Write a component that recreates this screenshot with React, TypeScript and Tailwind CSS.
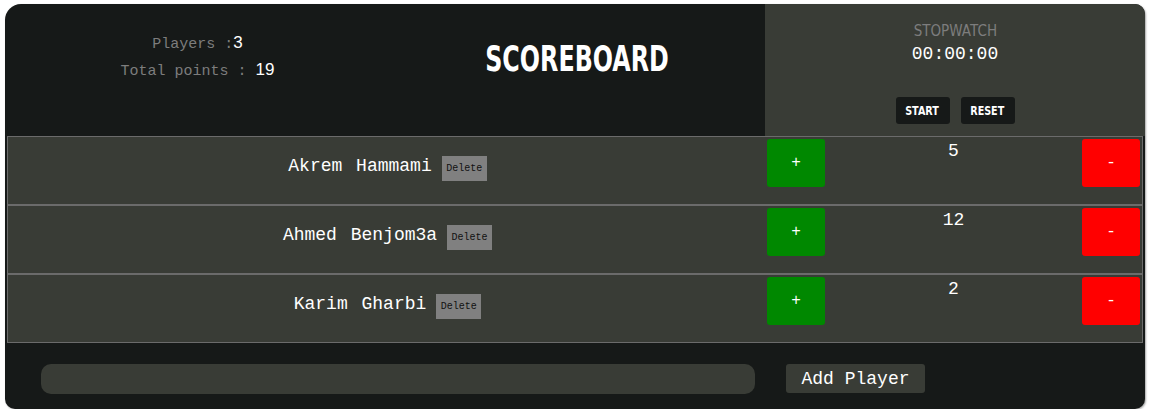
import React from "react";

const players = [
  { name: "Akrem Hammami", score: 5 },
  { name: "Ahmed Benjom3a", score: 12 },
  { name: "Karim Gharbi", score: 2 },
];

const mono = { fontFamily: '"Liberation Mono", "DejaVu Sans Mono", monospace' };

export default function App() {
  return (
    <div className="w-[1156px] h-[409px] bg-white pt-[4px] pl-[5px]">
      <div className="w-[1140px] h-[405px] bg-[#161918] rounded-tl-[16px] rounded-tr-[10px] rounded-b-[10px] overflow-hidden flex flex-col shadow-[1px_1px_2px_rgba(0,0,0,0.35)]">
        {/* Header */}
        <div className="h-[132px] flex shrink-0">
          <div className="w-[385px] pt-[25px] flex flex-col items-center font-['Liberation_Mono','DejaVu_Sans_Mono',monospace] text-[15px] leading-[27px] text-[#7d7d7d]">
            <div className="h-[27px]">
              Players :<span className="text-white text-[17px] leading-[27px] font-['Liberation_Sans',Arial,sans-serif]">3</span>
            </div>
            <div className="h-[27px]">
              Total points : <span className="text-white text-[17px] leading-[27px] font-['Liberation_Sans',Arial,sans-serif]">19</span>
            </div>
          </div>
          <div className="flex-1 flex justify-center pt-[33px]">
            <h1 className="text-white text-[35px] leading-[44px] font-bold font-['DejaVu_Sans',sans-serif] scale-x-[0.68]">
              SCOREBOARD
            </h1>
          </div>
          <div className="w-[380px] bg-[#393c36] flex flex-col items-center pt-[19px]">
            <div className="text-[#7d7d7d] text-[15px] leading-[16px] font-['DejaVu_Sans',sans-serif] scale-x-[0.9]">
              STOPWATCH
            </div>
            <div className="text-white text-[18px] leading-[22px] mt-[4px]" style={mono}>
              00:00:00
            </div>
            <div className="flex gap-[11px] mt-[32px]">
              <button className="w-[54px] h-[27px] bg-[#161918] rounded-[3px] text-white text-[12px] font-bold font-['DejaVu_Sans',sans-serif]">
                <span className="inline-block scale-x-[0.8]">START</span>
              </button>
              <button className="w-[54px] h-[27px] bg-[#161918] rounded-[3px] text-white text-[12px] font-bold font-['DejaVu_Sans',sans-serif]">
                <span className="inline-block scale-x-[0.8]">RESET</span>
              </button>
            </div>
          </div>
        </div>

        {/* Player rows */}
        <div className="mx-[2px] flex flex-col">
          {players.map((p) => (
            <div
              key={p.name}
              className="h-[69px] border border-[#6b6b6b] bg-[#393c36] flex items-start"
            >
              <div className="w-[759px] shrink-0 flex justify-center items-baseline gap-[10px] pt-[18px]">
                <span className="text-white text-[18px] leading-[22px] [word-spacing:3px]" style={mono}>
                  {p.name}
                </span>
                <button className="w-[45px] h-[25px] bg-[#808080] text-[#111] text-[10px] flex items-center justify-center" style={mono}>
                  Delete
                </button>
              </div>
              <button className="mt-[2px] w-[58px] h-[48px] bg-[#008800] rounded-[3px] text-white text-[16px]" style={mono}>
                +
              </button>
              <div className="flex-1 text-center text-white text-[18px] leading-[22px] pt-[3px]" style={mono}>
                {p.score}
              </div>
              <button className="mt-[2px] mr-[2px] w-[58px] h-[48px] bg-[#ff0000] rounded-[3px] text-white text-[16px]" style={mono}>
                -
              </button>
            </div>
          ))}
        </div>

        {/* Add player */}
        <div className="flex items-start pt-[21px] pl-[36px]">
          <div className="w-[714px] h-[30px] bg-[#393c36] rounded-[10px]" />
          <button className="ml-[31px] w-[139px] h-[29px] bg-[#393c36] rounded-[3px] text-white text-[18px] leading-[22px]" style={mono}>
            Add Player
          </button>
        </div>
      </div>
    </div>
  );
}
